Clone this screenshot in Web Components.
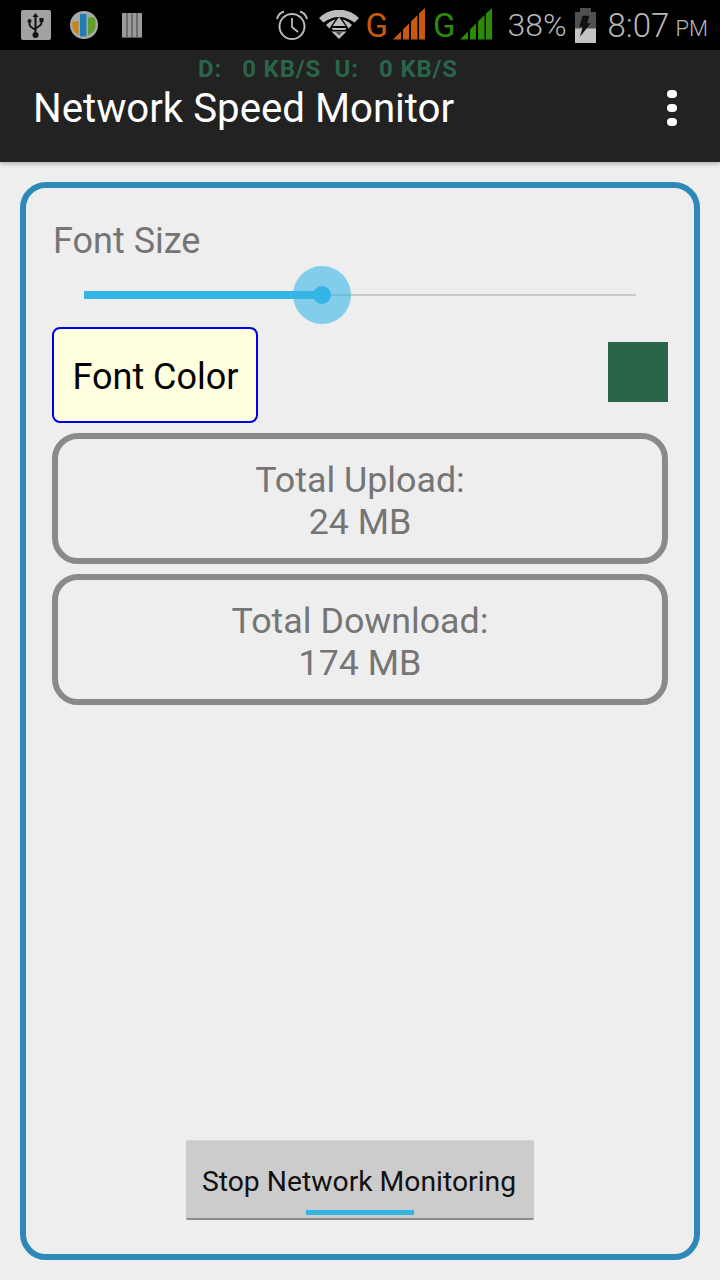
<!DOCTYPE html>
<html>
<head>
<meta charset="utf-8">
<title>Network Speed Monitor</title>
<style>
  html, body { margin: 0; padding: 0; }
  body { width: 720px; height: 1280px; overflow: hidden; background: #eeeeee; font-family: Roboto, "Liberation Sans", sans-serif; }
  speed-app { display: flex; flex-direction: column; height: 1280px; }
</style>
</head>
<body>
<speed-app>
  <status-bar></status-bar>
  <app-bar title="Network Speed Monitor" down="0 KB/S" up="0 KB/S"></app-bar>
  <main-panel>
    <font-size-slider label="Font Size" value="43.200"></font-size-slider>
    <font-color-row label="Font Color" color="#2a6549"></font-color-row>
    <total-box>Total Upload:<br>24 MB</total-box>
    <total-box>Total Download:<br>174 MB</total-box>
    <stop-button>Stop Network Monitoring</stop-button>
  </main-panel>
</speed-app>

<script>
const signalBars = 'M0 31.500L8 23.500V31.500zM10 31.500V21.500L16 15.500V31.500zM18 31.500V13.500L24.500 7V31.500zM26 31.500V5.500L32 0V31.500z'

/**
 * Define the status bar element.
 */
customElements.define('status-bar',
  class extends HTMLElement {
    constructor () {
      super()
      this.attachShadow({ mode: 'open' }).innerHTML = `
        <style>
          :host { display: flex; align-items: center; height: 50px; background: #000; flex: none; color: #b8b8b8; }
          svg { display: block; flex: none; }
          .left { display: flex; align-items: center; margin-left: 21px; }
          .right { display: flex; align-items: center; margin-left: auto; margin-right: 12px; font-weight: 300; }
          .pct { font-size: 32px; margin-left: 15px; }
          .time { font-size: 33px; margin-left: 12px; }
          .pm { font-size: 22px; margin-left: 6px; padding-top: 7px; }
          .g { font-size: 33px; font-weight: 400; line-height: 1; }
          .bars { margin-left: 5px; margin-bottom: 2px; }
        </style>
        <div class="left">
          <svg width="30" height="30" viewBox="0 0 30 30">
            <rect width="30" height="30" rx="2" fill="#a2a2a2"/>
            <path d="M14.500 3l3 4h-2v15h-2V7h-2z" fill="#111"/>
            <circle cx="14.500" cy="25" r="3" fill="#111"/>
            <path d="M8.500 12v2c0 2 1 3 3 4l3 2M20.500 11v1.500c0 2-1 3-3 4l-3 2" fill="none" stroke="#111" stroke-width="1.800"/>
            <circle cx="8.500" cy="11" r="2" fill="#111"/>
            <rect x="18.500" y="8" width="4" height="4" fill="#111"/>
          </svg>
          <svg width="28" height="28" viewBox="0 0 28 28" style="margin-left:19px">
            <circle cx="14" cy="14" r="14" fill="#a8a8a8"/>
            <path d="M2.500 10.500h6v13.500a13 13 0 0 1-6-8z" fill="#cb8412"/>
            <path d="M10 3h6.500v22.500h-6.500z" fill="#1f7fb4"/>
            <path d="M18 6.500h6.500a13 13 0 0 1 1 8c0 4-2 7-7.500 10z" fill="#5f9c2a"/>
          </svg>
          <svg width="20" height="25" viewBox="0 0 20 25" style="margin-left:24px">
            <rect width="20" height="25" fill="#9a9a9a"/>
            <path d="M5 0v25M10 0v25M15 0v25" stroke="#3e3e3e" stroke-width="1"/>
            <rect y="24" width="20" height="1" fill="#555"/>
          </svg>
        </div>
        <div class="right">
          <svg width="32" height="30" viewBox="0 0 32 30">
            <circle cx="16" cy="16.500" r="12.500" fill="none" stroke="#b8b8b8" stroke-width="2"/>
            <path d="M16 8v9l6 5" fill="none" stroke="#b8b8b8" stroke-width="1.800"/>
            <path d="M1 9C2 5 5 2.500 8 1.500M31 9c-1-4-4-6.500-7-7.500" fill="none" stroke="#b8b8b8" stroke-width="2"/>
          </svg>
          <svg width="40" height="29" viewBox="0 0 40 29" style="margin-left:11px;margin-top:-2px">
            <path d="M0 8C11 -3 29 -3 40 8L35.500 12.500C26 5 14 5 4.500 12.500z" fill="#bdbdbd"/>
            <path d="M7 15C10 12 13 10.500 16.500 9.500L12 16 10.500 18.500zM33 15C30 12 27 10.500 23.500 9.500L28 16 29.500 18.500z" fill="#bdbdbd"/>
            <path d="M20 7L26.500 16H13.500z" fill="#bdbdbd"/>
            <path d="M12.500 18h15l-1.500 2H14z" fill="#bdbdbd"/>
            <path d="M12.500 21.500h15L20 29z" fill="#bdbdbd"/>
            <path d="M16.500 22h7L20 25.500z" fill="#000" opacity=".55"/>
          </svg>
          <span class="g" style="color:#c9590f;margin-left:6px">G</span>
          <svg class="bars" width="32" height="32" viewBox="0 0 32 32"><path d="${signalBars}" fill="#c9590f"/></svg>
          <span class="g" style="color:#2b8a0a;margin-left:8px">G</span>
          <svg class="bars" width="32" height="32" viewBox="0 0 32 32"><path d="${signalBars}" fill="#2b8a0a"/></svg>
          <span class="pct">38%</span>
          <svg width="21" height="35" viewBox="0 0 21 35" style="margin-left:8px">
            <path d="M5 0h11v4h5v31H0V4h5z" fill="#505050"/>
            <path d="M0 20.500h21V35H0z" fill="#c4c4c4"/>
            <path d="M7.600 7.700h6.700l-2 7.600h3.400L5 28.700l2.700-10H4.300z" fill="#111"/>
          </svg>
          <span class="time">8:07</span>
          <span class="pm">PM</span>
        </div>
      `
    }
  }
)

/**
 * Define the action bar element.
 */
customElements.define('app-bar',
  class extends HTMLElement {
    constructor () {
      super()
      this.attachShadow({ mode: 'open' }).innerHTML = `
        <style>
          :host { display: block; position: relative; z-index: 1; height: 112px; flex: none; background: #222222; box-shadow: 0 2px 4px rgba(0,0,0,.25); }
          .speed { display: flex; padding-left: 198px; height: 37px; align-items: center; color: #2a6549; font-size: 24px; font-weight: bold; letter-spacing: .8px; white-space: pre; }
          .title { margin: 0 0 0 33px; color: #fff; font-size: 40.200px; font-weight: 400; line-height: 44px; }
          .menu { position: absolute; right: 43px; top: 40px; display: grid; gap: 6px; }
          .menu i { display: block; width: 10px; height: 8px; border-radius: 4px; background: #fff; }
        </style>
        <div class="speed"><span id="speed"></span></div>
        <h1 class="title"></h1>
        <div class="menu"><i></i><i></i><i></i></div>
      `
    }

    /**
     * Called after the element is inserted into the DOM.
     */
    connectedCallback () {
      this.shadowRoot.querySelector('.title').textContent = this.getAttribute('title')
      this.shadowRoot.querySelector('#speed').textContent = `D:   ${this.getAttribute('down')}  U:   ${this.getAttribute('up')}`
    }
  }
)

/**
 * Define the bordered main panel.
 */
customElements.define('main-panel',
  class extends HTMLElement {
    constructor () {
      super()
      this.attachShadow({ mode: 'open' }).innerHTML = `
        <style>
          :host { display: flex; flex-direction: column; flex: none; box-sizing: border-box; width: 680px; height: 1078px; margin: 20px 20px 0; padding: 32px 26px 34px; border: 6px solid #2d89b8; border-radius: 26px; background: #eeeeee; }
        </style>
        <slot></slot>
      `
    }
  }
)

/**
 * Define the font size slider.
 */
customElements.define('font-size-slider',
  class extends HTMLElement {
    constructor () {
      super()
      this.attachShadow({ mode: 'open' }).innerHTML = `
        <style>
          :host { display: block; flex: none; }
          .label { margin-left: 1px; color: #757575; font-size: 36px; line-height: 42px; }
          .track { position: relative; height: 2px; margin: 32px 32px 0; background: #c8c8c8; }
          .fill { position: absolute; left: 0; top: -3px; height: 8px; background: #33b5e5; }
          .halo { position: absolute; top: -28px; width: 58px; height: 58px; margin-left: -29px; border-radius: 50%; background: rgba(51,181,229,.58); }
          .dot { position: absolute; top: -8px; width: 18px; height: 18px; margin-left: -9px; border-radius: 50%; background: #33b5e5; }
        </style>
        <div class="label"></div>
        <div class="track"><div class="fill"></div><div class="halo"></div><div class="dot"></div></div>
      `
    }

    /**
     * Called after the element is inserted into the DOM.
     */
    connectedCallback () {
      const value = this.getAttribute('value') + '%'
      this.shadowRoot.querySelector('.label').textContent = this.getAttribute('label')
      this.shadowRoot.querySelector('.fill').style.width = value
      this.shadowRoot.querySelector('.halo').style.left = value
      this.shadowRoot.querySelector('.dot').style.left = value
    }
  }
)

/**
 * Define the row holding the colour button and its swatch.
 */
customElements.define('font-color-row',
  class extends HTMLElement {
    constructor () {
      super()
      this.attachShadow({ mode: 'open' }).innerHTML = `
        <style>
          :host { display: flex; flex: none; align-items: center; justify-content: space-between; margin-top: 31px; }
          button { box-sizing: border-box; width: 206px; height: 96px; padding: 4px 0 0 1px; border: 2px solid #0000f0; border-radius: 8px; background: #ffffe0; color: #000; font: 36px Roboto, "Liberation Sans", sans-serif; }
          .swatch { width: 60px; height: 60px; margin-bottom: 6px; }
        </style>
        <button type="button"></button>
        <div class="swatch"></div>
      `
    }

    /**
     * Called after the element is inserted into the DOM.
     */
    connectedCallback () {
      this.shadowRoot.querySelector('button').textContent = this.getAttribute('label')
      this.shadowRoot.querySelector('.swatch').style.background = this.getAttribute('color')
    }
  }
)

/**
 * Define the boxes showing the traffic totals.
 */
customElements.define('total-box',
  class extends HTMLElement {
    constructor () {
      super()
      this.attachShadow({ mode: 'open' }).innerHTML = `
        <style>
          :host { display: block; flex: none; box-sizing: border-box; height: 131px; margin-top: 10px; padding-top: 20px; border: 6px solid #8a8a8a; border-radius: 26px; color: #757575; font-size: 35.800px; line-height: 42px; text-align: center; }
        </style>
        <slot></slot>
      `
    }
  }
)

/**
 * Define the stop button at the bottom of the panel.
 */
customElements.define('stop-button',
  class extends HTMLElement {
    constructor () {
      super()
      this.attachShadow({ mode: 'open' }).innerHTML = `
        <style>
          :host { display: block; flex: none; align-self: center; margin-top: auto; }
          button { position: relative; display: block; box-sizing: border-box; width: 348px; height: 80px; padding: 4px 2px 0 0; border: 0; border-top: 1px solid #d6d6d6; border-bottom: 2px solid #8c8c8c; border-radius: 2px; background: #cccccc; color: #111; font: 28.300px Roboto, "Liberation Sans", sans-serif; }
          i { position: absolute; left: 120px; bottom: 3px; width: 108px; height: 5px; background: #33b5e5; }
        </style>
        <button type="button"><slot></slot><i></i></button>
      `
    }
  }
)
</script>
</body>
</html>
